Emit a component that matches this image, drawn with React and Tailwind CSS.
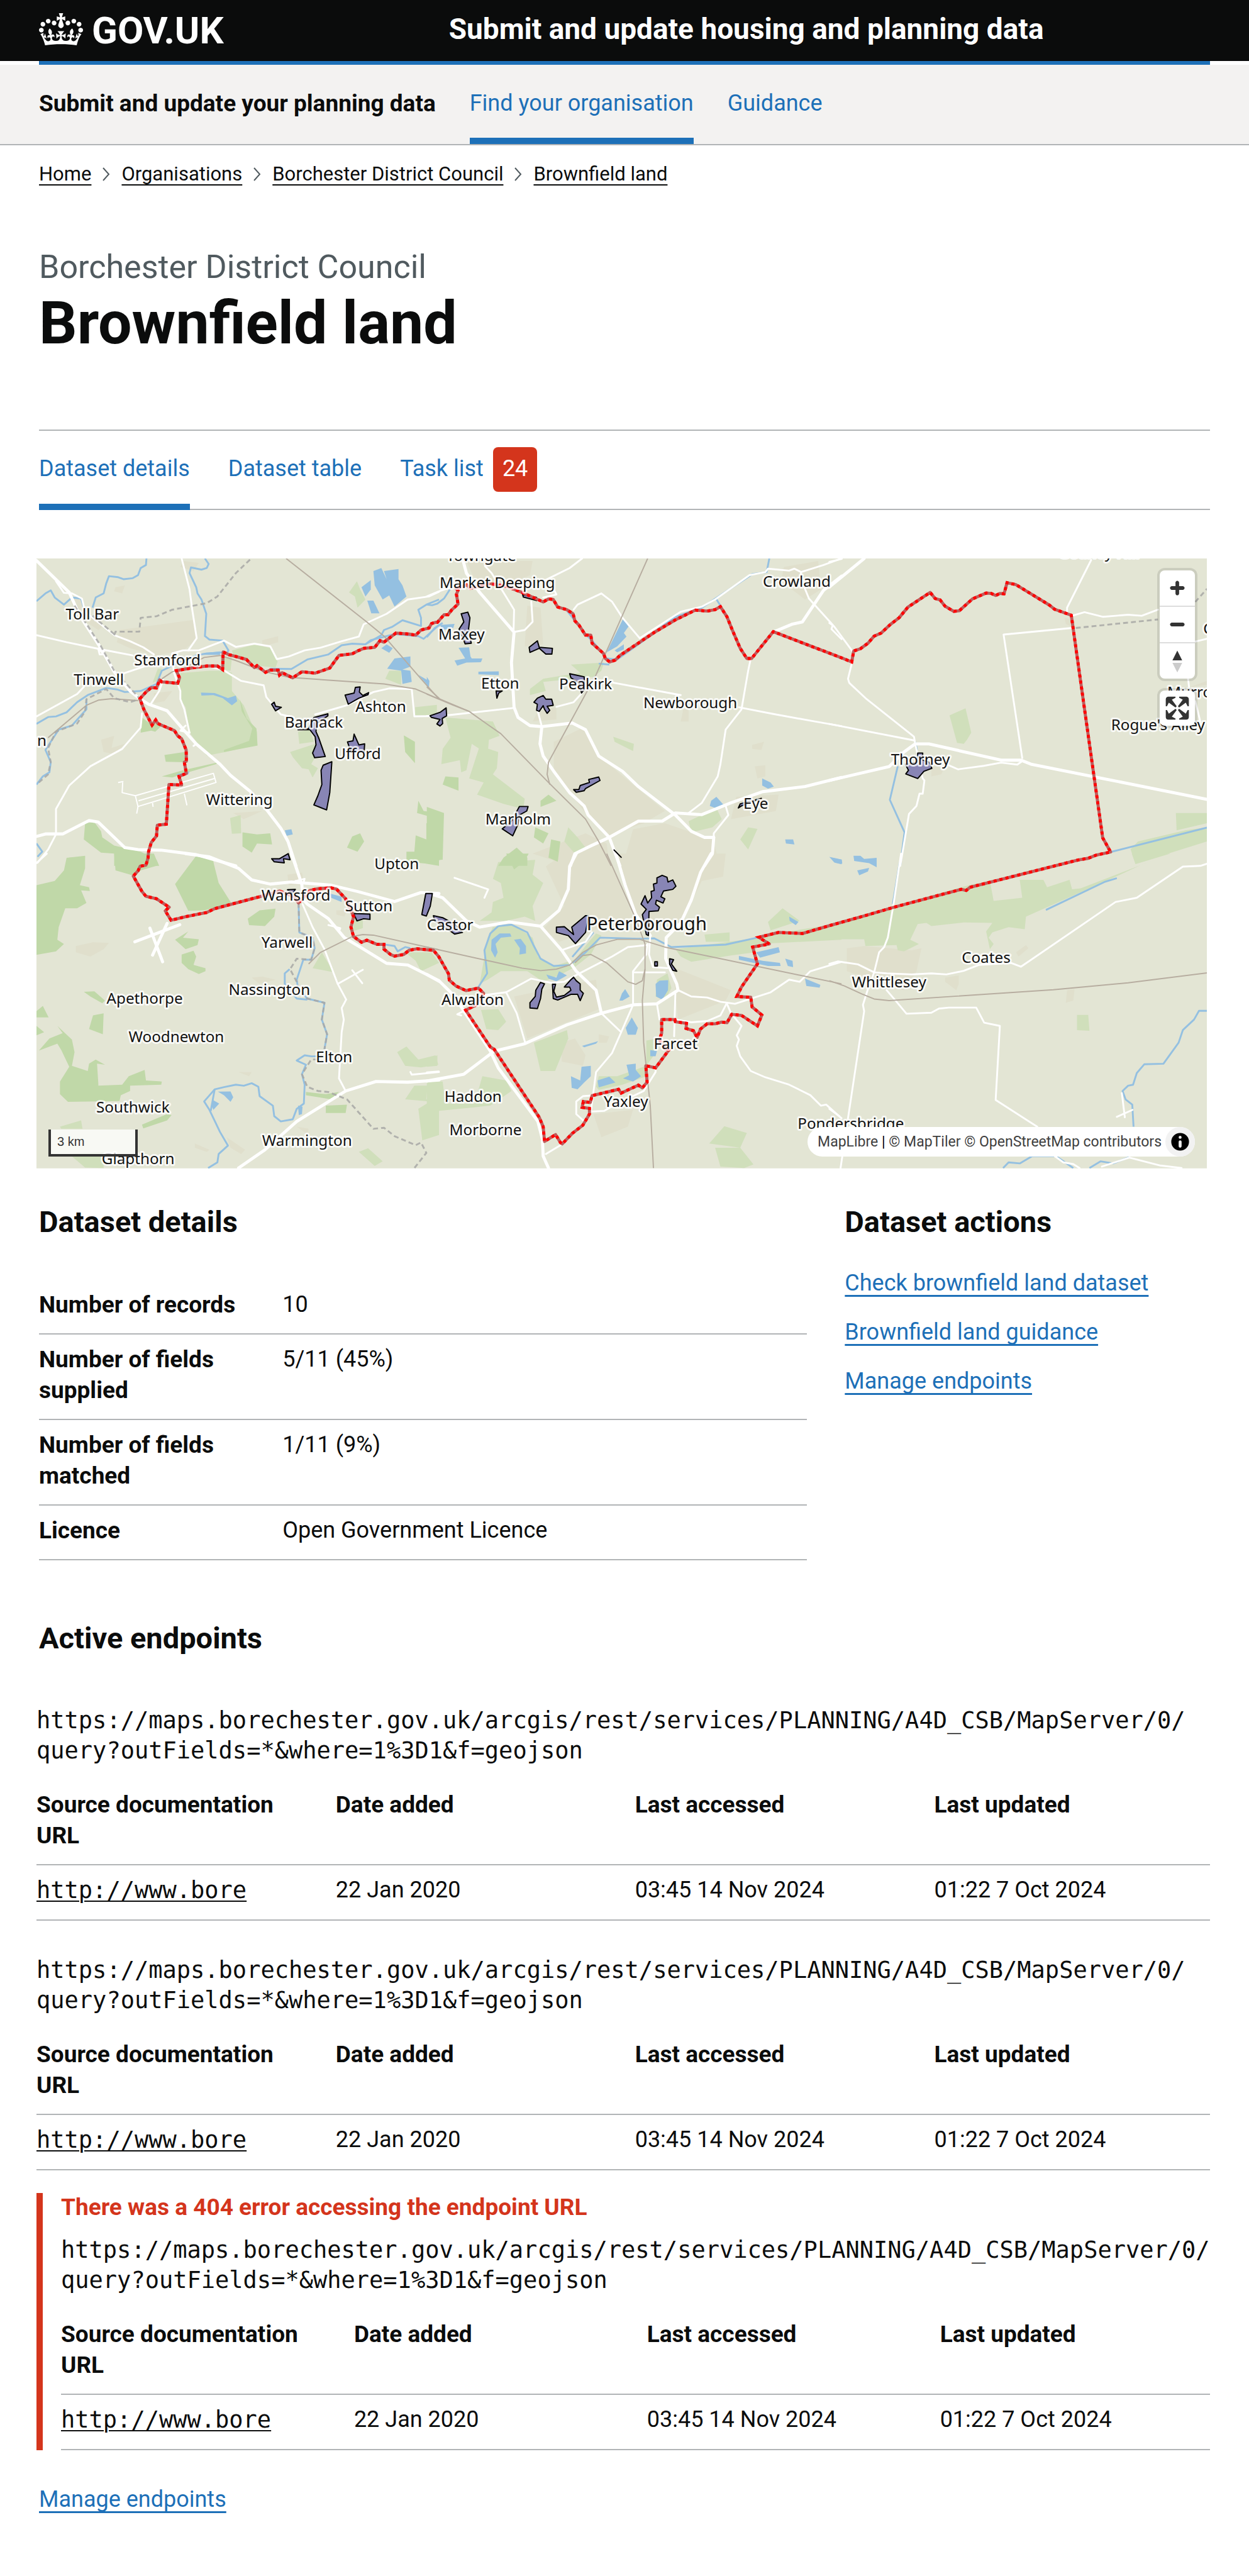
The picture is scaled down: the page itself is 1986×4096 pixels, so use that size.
import React from "react";

/* ---------- Map data: each survey sheet has its own origin and grid scale ---------- */

const SHEETS = {
  nw: [40, 900, 2.306, 3],
  n: [700, 900, 2.306, 3],
  ne: [1360, 900, 2.45, 3],
  sw: [40, 1400, 2.306, 2.904],
  s: [700, 1400, 2.306, 2.904],
  se: [1360, 1400, 2.45, 2.904],
};

function project(sheet, text) {
  const [ox, oy, sx, sy] = SHEETS[sheet];
  return text
    .trim()
    .split(/\s+/)
    .map((pair) => {
      const [x, y] = pair.split(",").map(Number);
      return (ox + x / sx).toFixed(1) + "," + (oy + y / sy).toFixed(1);
    })
    .join(" ");
}

const LAND = {
  nw: [
    "360,400 500,375 640,350 650,450 600,500 500,525 400,490 350,460",
    "170,240 220,250 240,320 300,380 280,400 200,330",
    "600,60 660,70 640,110 590,90",
    "490,710 560,700 530,750 490,760",
    "290,940 340,920 330,980 380,960 340,1010 300,1000",
    "900,450 960,430 960,460 900,480",
    "790,1300 900,1290 830,1330",
    "345,190 380,180 370,220 340,210",
  ],
  n: [
    "150,60 400,60 390,130 300,180 180,150",
    "480,950 590,880 650,1020 900,1290 820,1350 690,1410 600,1300 480,1100",
    "780,1380 900,1350 1080,1430 1110,1560 740,1560",
    "1350,90 1480,60 1490,200 1430,250 1340,160",
    "1170,1220 1330,1210 1320,1290 1150,1330",
    "420,800 490,780 490,840 400,850",
    "380,280 430,290 440,470 370,480",
    "970,790 990,790 990,850 960,850",
    "1240,1070 1280,1065 1280,1120 1250,1130",
    "1230,965 1275,950 1265,990 1230,985",
    "400,1500 600,1400 680,1450 690,1560 540,1560",
  ],
  ne: ["410,1060 460,1080 450,1110 410,1120", "945,340 985,350 985,390 950,370", "1450,680 1517,650 1517,670"],
  sw: [
    "195,440 260,422 320,425 300,455 250,490 195,470",
    "860,590 900,585 950,600 890,620",
    "995,100 1050,90 1060,150 1000,150",
    "1180,270 1220,270 1210,300 1180,290",
    "810,1040 860,1040 850,1060",
    "765,1350 835,1410 820,1430 780,1400",
    "645,1380 700,1410 690,1420 645,1400",
    "1030,1300 1075,1310 1070,1335",
  ],
  s: [
    "450,60 520,0 680,0 780,300 500,420 440,360 520,250",
    "720,0 1130,0 1120,110 1040,130 960,330 800,330",
    "330,680 640,600 650,740 380,880",
    "930,540 1150,650 1130,700 950,790",
    "630,1240 780,1220 760,1300 660,1350",
    "510,900 560,880 600,960 590,1010 510,990",
    "650,860 690,870 680,900 650,900",
  ],
  se: ["70,450 140,440 330,460 370,450 350,560 300,650 70,560", "465,590 520,580 520,620 510,650 465,610", "750,470 790,435 800,450 760,490", "955,650 985,645 980,700 950,710"],
};

const PARK = {
  nw: [
    "590,612 700,600 755,600 785,610 785,700 830,770 860,860 880,900 880,965 760,1000 690,1018 625,905 610,780 590,740 585,680",
    "785,500 870,472 935,490 958,555 950,585 880,575 840,545 790,520",
    "505,590 520,590 510,645 485,660",
    "740,530 785,535 780,600 750,595",
    "1258,160 1270,200 1290,250 1260,290 1250,235 1228,215",
    "1005,1000 1100,960 1110,1000 1085,1060 1110,1080 1090,1125 1075,1085 1050,1080 1015,1025",
    "1035,900 1080,890 1095,950 1040,960",
    "778,1325 818,1310 820,1400 785,1402",
    "1478,780 1560,768 1560,820 1478,818",
    "1365,640 1380,600 1425,600 1425,670",
  ],
  n: [
    "70,830 250,850 275,920 235,940 230,1010 170,960 150,1090 130,1100 125,1040 55,1060 60,985 90,930",
    "200,970 270,1000 265,1080 250,1110 370,1230 365,1280 290,1255 190,1210 215,1150 160,1130",
    "545,570 670,560 660,600 630,630 440,655 450,700 390,720 390,690 440,640 580,610",
    "705,925 783,960 780,995 710,950",
    "535,1370 570,1420 600,1470 560,1500 520,1440",
    "990,1340 1095,1275 1115,1330 1080,1370 1000,1395",
    "1185,1430 1215,1370 1250,1378 1215,1480",
  ],
  ne: [
    "483,820 547,785 570,905 553,940 540,960 513,955",
    "1392,1300 1517,1300 1517,1350 1395,1385",
    "1240,1440 1430,1385 1517,1370 1517,1440 1230,1550 1210,1478",
  ],
  sw: [
    "1125,470 1170,565 1090,545",
    "1250,305 1280,320 1280,355 1240,370",
    "1410,945 1445,918 1490,980 1555,960 1565,1005 1500,1018 1440,1010",
    "1475,1105 1525,1105 1520,1170 1568,1170 1568,1340 1505,1365 1490,1215 1535,1180 1440,1170",
    "1265,1420 1300,1403 1355,1465 1325,1487",
    "135,1300 215,1270 220,1310 140,1310",
    "170,1430 300,1420 300,1497 230,1495",
    "1440,470 1540,470 1568,520 1500,560 1480,510",
  ],
  s: [
    "940,455 1255,400 1330,378 1568,330 1568,410 1250,430 1240,470 1150,485 1000,515 960,490",
    "1290,325 1345,260 1410,320 1300,365",
    "1050,385 1145,375 1145,420 1055,420",
    "200,620 230,400 250,350 330,340 400,400 420,490 480,535 560,505 600,440 640,380 660,390 620,480 560,540 500,580 440,610 380,560 280,560 230,600",
    "270,40 410,30 400,100 440,140 400,250 410,320 370,300 300,320 200,320 245,280 250,230 290,210 280,140 250,120",
    "405,900 530,840 535,880 485,1035 430,1035",
    "870,600 910,570 925,640 900,700 865,680",
    "205,745 270,740 300,800 270,840 225,835",
    "0,980 40,960 40,1010 0,1015",
    "210,1060 300,1080 320,1130 240,1200 0,1230 0,1080 60,1085 70,1190 180,1190",
    "640,1110 650,1060 720,1060 830,1010 830,1060 740,1100 650,1125",
    "830,890 875,880 870,940 830,1010",
    "1125,1298 1210,1330 1185,1400 1155,1395 1068,1380",
    "1090,1400 1185,1400 1235,1480 1200,1497 1110,1490",
  ],
  se: [
    "0,335 360,215 560,150 645,130 660,225 775,210 765,125 860,125 875,160 965,125 975,170 1010,165 1370,0 1250,55 1150,110 790,300 785,360 720,350 655,375 640,400 660,430 645,455 630,370 655,330 540,328 410,345 390,330 355,335 325,410 360,430 300,465 275,460 270,435 145,440 140,408 0,408",
    "1215,0 1370,0 1230,50",
    "995,768 1040,768 1045,843 995,840",
  ],
};

const WOOD = {
  nw: [
    "815,740 822,800 862,885 850,945 755,990 755,1000 882,968 878,885 840,835",
    "445,830 480,865 495,840 520,870 495,900 480,895 440,905",
    "530,1015 605,1000 610,1050 535,1048",
    "520,1120 600,1090 735,1050 725,1060 620,1100 560,1125",
    "230,1350 265,1345 290,1390 295,1420 340,1460 440,1490 500,1530 510,1560 340,1560 340,1500 290,1495 225,1430",
    "170,1520 230,1515 225,1560 165,1560",
    "625,1560 650,1515 715,1530 715,1560",
    "1435,918 1477,950 1477,1055 1440,1000",
    "825,1395 880,1405 930,1400 937,1455 880,1450 860,1495 825,1465",
    "1240,1415 1270,1400 1285,1440 1260,1490 1220,1470",
    "1490,1240 1510,1290 1568,1300 1568,1330 1485,1300",
    "1480,1410 1520,1430 1520,1350 1568,1340 1568,1560 1515,1548 1445,1540 1445,1490 1475,1490",
  ],
  n: [
    "70,1120 120,1125 120,1190 60,1160",
    "430,1240 460,1210 490,1240 430,1270",
    "0,1270 65,1300 60,1530 0,1535",
    "410,1370 460,1400 440,1450 405,1420",
    "470,1430 505,1440 495,1540 460,1520",
    "290,1520 340,1470 380,1520 380,1560 270,1560",
  ],
  ne: [],
  sw: [
    "46,150 115,130 150,80 160,20 230,10 230,70 210,150 245,160 248,178 215,175 235,235 200,260 155,260 130,350 125,410 150,430 120,465 46,482",
    "340,0 490,0 508,55 440,80 415,105 345,80",
    "650,10 715,40 735,140 785,240 680,270 620,272 570,145",
    "845,310 890,270 950,262 945,300 910,345 850,340",
    "570,410 620,370 600,400 660,408 655,435 610,455",
    "595,480 640,462 650,490 640,530 685,545 685,560 660,573 620,550 595,520",
    "225,658 265,655 305,700 295,712 250,680",
    "46,750 70,725 92,780 46,780",
    "260,770 300,760 297,860 245,835",
    "46,820 75,850 46,865",
    "55,938 95,880 145,855 125,820 180,885 190,945 180,1010 240,1035 245,1000 270,980 305,1005 275,1000 280,1095 280,1105 370,1100 395,1060 455,1030 460,1080 520,1085 518,1100 400,1105 400,1130 365,1150 360,1178 165,1182 135,1145 135,1085 170,1015 140,935 125,905",
    "445,1290 540,1240 557,1245 540,1270 450,1308",
    "1065,1135 1140,1145 1190,1135 1160,1170 1065,1150",
    "1140,1200 1220,1195 1215,1235 1140,1235",
    "1475,0 1568,0 1568,35 1520,48",
  ],
  s: ["300,0 385,0 370,35 330,75", "0,0 60,0 50,30 0,38"],
  se: [],
};

const LAKE = {
  nw: [
    "1320,110 1350,95 1370,150 1360,110 1415,100 1415,150 1430,180 1445,235 1400,285 1380,230 1355,250 1325,180",
    "1275,190 1310,155 1310,200 1290,235",
    "1297,255 1320,255 1343,318 1312,318",
    "1350,490 1370,470 1393,490 1380,512",
    "1372,590 1400,540 1460,530 1460,580 1430,595 1460,600 1465,655 1430,665 1425,600",
    "1490,620 1530,650 1530,680",
    "668,708 720,710 770,735 800,722 805,750 785,770 750,735 715,720 670,722",
    "575,1110 625,1095 620,1110 590,1122",
    "985,1385 1010,1380 1015,1405 992,1412",
    "675,515 740,505 740,522 680,522",
  ],
  n: [
    "742,345 763,382 745,415 755,432 720,480 680,510",
    "710,500 745,470 745,495 720,510",
    "120,487 160,485 165,530 170,540 210,540 205,558 150,560 115,575 105,550 145,540",
    "195,605 272,603 272,622 195,618",
    "50,375 105,370 100,390 60,400",
    "1070,1265 1075,1240 1095,1220 1122,1260 1090,1275",
    "1268,1130 1300,1150 1312,1170 1290,1180 1268,1165",
    "1355,1430 1385,1430 1390,1455 1358,1450",
    "0,630 10,650 8,680 0,680",
    "1525,1518 1568,1530 1568,1552 1545,1545",
  ],
  ne: [],
  sw: [
    "732,1133 780,1132 790,1160 780,1182 755,1150",
    "712,1172 737,1190 715,1220 708,1200",
    "1035,1200 1052,1205 1050,1240 1038,1245",
    "1155,190 1200,205 1200,230 1160,210",
  ],
  s: [
    "245,410 275,380 315,380 320,395 280,400 260,430 268,470 258,495 243,460",
    "330,410 355,405 375,440 375,475 350,480 352,450",
    "452,575 490,590 500,560 530,580 490,608 460,595",
    "865,620 880,605 913,602 912,650 890,695 867,680",
    "738,665 750,645 767,680 740,700 728,700",
    "775,780 798,830 790,862 760,862 752,830",
    "587,915 648,893 640,905 595,922",
    "845,935 870,940 865,965 845,965",
    "545,1060 580,1080 585,1015 620,1010 620,1060 595,1090 570,1122 548,1115",
    "645,1080 690,1062 713,1090 650,1113",
    "755,1005 790,1000 790,1030 810,1060 780,1085 742,1070 765,1055",
    "1180,487 1270,510 1335,520 1338,535 1290,535 1180,505",
    "1245,470 1330,445 1335,470 1260,495",
    "1355,500 1383,510 1385,540 1365,535",
    "1430,595 1488,625 1485,638 1435,630",
    "1370,300 1405,325 1395,340 1372,320",
  ],
  se: ["0,15 50,28 52,48 20,42", "97,10 125,10 140,25 190,20 190,65 160,45 100,35", "112,80 160,68 155,85 120,103"],
};

const RIVER = {
  nw: [
    "46,258 80,220 100,205 115,240 150,275 180,240 215,245 225,290",
    "462,48 460,80 440,95 430,130 410,145 375,150 355,140 320,135 310,170 300,220 270,240 258,290",
    "683,48 697,75 690,95 670,103 630,92 625,120 650,190 655,220 670,250 688,320 683,430 700,447 750,452 772,500 765,515",
    "46,862 90,828 120,825 160,805 200,755 240,720 310,685 350,692 380,705 440,700 500,665 520,600 560,575 650,525 690,515 750,510",
    "46,1160 70,1120 95,1100 100,1050 80,990 105,940 130,890 180,870 235,790 235,740",
    "930,590 1010,592 1070,545 1150,520 1200,475 1240,467 1290,470 1350,425 1360,400 1390,385 1430,352 1500,380 1500,340 1490,300 1520,275 1568,250",
    "1290,470 1310,450 1400,420 1490,430 1510,443 1568,375",
    "46,1450 68,1490 50,1515",
  ],
  n: [
    "0,275 20,278 40,270 65,245 90,195",
    "0,435 30,390 60,365",
    "1295,48 1285,115 1230,125 1040,290 940,335 860,410",
    "1095,248 1110,280",
    "530,305 560,355 600,420 630,460 680,540 720,545 860,415",
    "650,565 690,570",
  ],
  ne: ["345,950 352,990", "275,1070 243,1235 302,1395 285,1560", "1130,1492 1517,1372"],
  sw: [
    "1037,235 1040,375 1090,400 1098,450 1085,505 1055,505 1030,600 1035,640 1070,690 1135,710 1125,790 1145,860 1135,930",
    "1110,965 1085,965 1060,960 1030,985 1065,1005 1050,1050 1060,1100 1057,1190 1030,1215 1015,1265 970,1275 945,1250 940,1200 890,1155 885,1110 860,1093 830,1105 800,1100 755,1112 720,1122 680,1180 700,1220 740,1325 770,1390 735,1430 730,1470 695,1497",
    "720,1122 705,1225",
    "1003,550 985,570 985,620 1030,690 1070,695",
    "1360,432 1400,440 1412,465 1440,445 1460,450",
  ],
  s: ["195,635 228,570 218,460 240,380 270,345 320,338 380,375 405,440 430,500 480,535 540,530 600,470 655,400 800,405 860,403 925,445 1130,433 1255,398", "550,492 630,375"],
  se: [
    "283,40 255,240",
    "870,268 1105,135 1155,117",
    "1517,748 1485,748 1465,790 1420,840 1403,900 1342,1000 1265,1003 1235,1045 1220,1100 1200,1105 1178,1130 1190,1170 1217,1195 1222,1300",
    "698,1497 720,1470 765,1475 815,1440 910,1440 980,1497",
    "1045,1497 1090,1465 1140,1475 1205,1445",
  ],
};

const RAIL = {
  nw: [
    "990,48 1290,355 1360,430 1500,640 1568,740",
    "1025,635 1360,665 1480,690 1568,740",
    "90,930 235,770 280,745 330,738 430,747",
    "520,640 560,605 600,590 680,535 740,525 800,550 910,605 1000,632 1025,635",
  ],
  n: ["0,680 50,740 160,800 230,865 280,910 460,1150 600,1330 650,1440 697,1560", "0,715 100,770 160,800", "835,48 640,620 460,1050 455,1110 465,1160"],
  ne: [],
  sw: ["1075,525 1120,470 1240,395 1280,385 1320,388 1568,458"],
  s: [
    "680,0 790,310 825,430 825,550 815,700 820,900 845,1200 857,1497",
    "0,445 250,515 360,545 430,557 490,550 540,530 590,470 640,435 720,408 805,408 900,445 1568,620",
    "560,520 590,485 620,480 680,520 760,610 790,622 815,605 825,550",
  ],
  se: ["0,605 60,630 130,668 180,692 240,700 900,648 1200,615 1517,568"],
};

const MAJOR = {
  nw: [
    "46,58 170,215 210,330 290,490 340,605 400,700 437,738 470,765 540,797 605,895 650,960 740,1060 780,1115 855,1195 920,1290 970,1375 997,1440 1027,1560",
    "46,1415 80,1403 145,1403 245,1337 280,1345 380,1470 430,1480 520,1483 650,1505 800,1560",
  ],
  n: [
    "543,1560 560,1500 620,1462 690,1420 800,1340 890,1340 940,1300 1040,1308 1150,1250 1270,1195 1430,1170 1568,1125",
    "135,48 150,120 200,215 330,410 320,560 330,780 345,830 390,870 435,875 550,857 600,890 650,1020 740,1095 800,1170 940,1310 1000,1390 1050,1420 1085,1420",
    "435,875 428,960 440,1020 480,1095 540,1200 595,1265 610,1310 690,1420 730,1560",
    "1568,135 1500,205 1420,360 1380,372 1310,410 1225,540",
    "1085,1420 1080,1500 1050,1560",
  ],
  ne: ["0,1140 240,1072 300,1000 345,960 400,960 690,1040 770,1040 810,1060 1098,1130 1517,1233", "0,188 140,48"],
  sw: [
    "1010,0 1040,110 1050,150 1052,215 1070,240 1150,310 1210,400 1270,445 1370,522 1450,530 1568,605",
    "610,0 700,15 810,70 860,125 930,145 1010,135 1160,150 1260,180 1400,228 1500,185 1568,190",
    "418,420 588,338",
    "475,355 523,515",
    "540,332 485,483",
    "1568,1078 1450,1088 1330,1085 1215,1130 1030,1275 910,1410 810,1497",
  ],
  s: [
    "0,575 50,610 90,660 130,730 240,940 270,1020 420,1275 437,1360 440,1440 460,1497",
    "0,185 60,210 150,320 200,350 310,325 430,345 500,270 535,170 540,60 565,0",
    "1075,0 1035,90 1000,220 960,330 905,400 903,500 945,620 950,650 870,715 780,720 660,760 530,815 370,905 255,940 140,1050 0,1083",
    "715,0 750,150 790,290 845,390",
    "430,345 510,460 565,560 640,650 660,760",
  ],
  se: [],
};

const MINOR = {
  nw: [
    "46,425 160,460 290,495 410,525",
    "120,160 150,217 180,220 218,245 230,310 340,425 400,455 450,485 490,520",
    "595,48 625,200 635,300 652,440 620,500",
    "560,515 600,500 660,500 755,452 800,483 870,467 930,480 955,543 1000,530 1060,500 1120,487 1200,455 1265,432 1283,372 1370,320 1450,250 1530,235 1568,212",
    "46,825 200,715 225,680",
    "350,625 470,572 560,570",
    "560,515 565,605 590,700 590,740 605,790 625,905",
    "565,605 640,585 700,580 750,595 820,650 905,672 915,730 970,815 1020,830",
    "1100,815 1180,785 1220,770 1320,705 1380,687 1465,690 1475,825 1568,823",
    "525,645 510,700 480,760",
    "445,810 440,880 370,985 250,1070 170,1165 120,1280 120,1405 90,1480 50,1545",
    "280,490 300,520 285,520 280,495",
    "625,905 590,895 610,870",
    "650,960 640,970",
  ],
  n: [
    "0,235 45,210 90,190",
    "220,85 245,120 330,300 328,410 370,400 400,360 395,260",
    "555,300 570,275 660,220 700,260 740,340 805,440",
    "440,160 540,95 587,48",
    "480,200 490,225 440,240",
    "805,440 960,310 1040,285 1090,250 1220,130 1280,115 1290,98 1370,108 1390,98 1415,115 1500,80 1568,48",
    "1415,115 1415,150 1445,245 1535,375 1530,395 1568,445",
    "1225,540 1215,600 1190,790 1130,890 1110,1060 1100,1120 1040,1250 985,1305",
    "700,658 960,720",
    "1180,780 1310,813 1460,848 1568,873",
    "490,778 555,755 590,705",
    "0,823 75,820 330,783",
    "420,800 435,875",
    "1130,1265 1140,1310 1085,1400 1085,1420",
  ],
  ne: [
    "0,65 50,50",
    "0,365 18,380 92,503",
    "92,555 75,640 80,660 150,740 340,925 345,960",
    "0,862 340,943",
    "1052,55 955,290 955,310",
    "975,330 1025,312 1100,335 1200,325 1255,330 1320,300",
    "975,390 700,422 775,1030",
    "775,1045 755,1062 690,1052 620,1068 517,1085 470,1060",
    "1440,630 1445,680",
    "1470,750 1490,850",
    "1470,457 1517,443",
    "345,960 375,1130 382,1140 375,1205 362,1205 350,1265 320,1305 285,1560",
  ],
  sw: [
    "1052,240 1090,350 1135,455 1185,620 1217,695 1200,735 1208,790 1200,850 1190,1070 1215,1130",
    "1185,620 1280,553",
    "1240,555 1278,617",
    "46,45 85,0",
    "1460,1040 1465,1052 1568,1040",
    "1150,340 1195,355 1190,370",
    "1025,130 1060,120 1055,140 1025,130",
  ],
  s: [
    "660,760 735,850 700,950 640,1040 620,1230",
    "735,850 780,720 780,560 830,480 835,430",
    "780,565 900,565",
    "845,390 840,480 855,540 910,545",
    "510,460 600,420 625,375",
    "835,435 760,445 700,490 570,575 520,610 470,615 395,595 300,660 340,760 372,900",
    "210,675 300,660",
    "620,1152 590,1155 565,1180 565,1240 600,1280",
    "620,1228 670,1225 720,1190 820,1130 865,1040 865,1020",
    "870,715 880,790",
    "940,790 1000,803 1060,797 1110,770 1135,710",
    "950,650 1000,680 1060,685 1110,705 1165,715 1300,660 1370,600 1410,610 1450,560 1568,515",
    "940,660 935,870",
    "1135,715 1150,760 1190,820 1172,865 1180,885 1172,915 1185,965 1225,1035 1280,1065 1370,1100 1450,1150 1490,1200 1510,1195 1568,1260",
    "510,1385 450,1430",
    "105,115 232,170 218,210",
    "0,1042 45,1037",
    "147,745 115,765 130,770",
  ],
  se: [
    "288,0 258,240 235,400 220,445 200,470 180,565 155,645 135,720 140,750 75,1260 45,1497",
    "0,525 35,513 115,527 180,565 230,570 330,575 410,570 470,575 540,558 600,530 730,520 770,538 1150,230 1235,210 1420,62 1490,58 1517,48",
    "230,650 270,705 310,762 410,757 440,738 480,733 590,733 622,805 685,820 668,1173 835,1300",
    "1175,1140 1187,1255",
    "1155,1253 1218,1220",
    "0,1215 40,1250",
    "905,1440 940,1470 980,1478 1005,1497",
    "1095,1490 1205,1447 1330,1485 1415,1497",
  ],
};

const TRACK = {
  nw: ["372,1150 370,1200 420,1215 715,1105 725,1150 430,1268 420,1215", "432,1240 720,1130", "430,1268 425,1303", "605,1205 615,1262", "355,1150 375,1145", "485,1250 487,1270"],
  n: [],
  ne: [],
  sw: [],
  s: [],
  se: [],
};

const BORDER = {
  nw: [
    "340,425 345,408 435,408 440,340 500,332 560,300 690,268 730,235 800,120 858,48",
    "190,280 290,480 340,600 437,738 400,755 340,735 310,690 235,740 230,800 200,860 120,900 90,980 100,1050 90,1110 46,1160",
    "258,330 340,420",
  ],
  n: [],
  ne: ["990,390 1320,348", "1470,262 1517,197"],
  sw: [
    "1037,235 1040,375 1090,400 1098,450 1085,505 1030,500 1005,550 1030,610 1035,640 1070,690 1135,710 1125,790 1145,860 1135,930",
    "1110,980 1085,980 1050,1050 1070,1110 1110,1130 1150,1135 1220,1170 1320,1310 1360,1305 1400,1345 1480,1388 1500,1375 1520,1425 1475,1497",
  ],
  s: [],
  se: [],
};

const SITES = {
  nw: [
    "1213,720 1247,710 1252,682 1270,680 1267,705 1280,722 1302,708 1300,718 1265,735 1225,765",
    "935,765 945,755 950,775 972,780 950,797 940,775",
    "1035,890 1075,885 1095,830 1148,812 1148,822 1105,860 1103,900 1113,930 1138,1022 1098,1028 1090,1005 1103,965 1100,925 1080,890",
    "1222,950 1243,945 1247,912 1255,935 1265,965 1287,960 1285,1000 1235,1000",
    "1163,1048 1155,1200 1143,1285 1095,1260 1110,1215 1125,1160 1122,1090 1130,1065",
    "935,1525 965,1525 998,1500 1005,1530 980,1525 983,1545 945,1540",
  ],
  n: [
    "130,320 155,312 163,340 158,395 168,465 145,468 122,395 140,360",
    "387,485 418,453 425,485 475,490 473,518 450,518 425,490 390,510",
    "540,615 595,630 597,690 585,710 575,660 545,635",
    "265,735 262,700 285,700 272,710",
    "405,755 418,735 440,722 450,740 472,740 478,770 455,775 465,795 455,810 445,790 440,772 425,800 415,795 418,765",
    "12,822 50,805 73,783 75,822 58,835 60,860 50,872 38,862 50,840 18,830",
    "555,1185 575,1185 580,1165 615,1150 612,1135 650,1123 655,1140 600,1180 595,1190 565,1198",
    "350,1268 383,1268 378,1290 350,1310 345,1355 325,1412 285,1378 320,1340",
    "362,225 415,240 415,255 365,238",
    "1178,1275 1185,1255 1265,1228 1190,1265",
    "708,1482 735,1518",
  ],
  ne: ["355,1005 375,1005 375,1040 400,1050 412,1080 380,1095 355,1130 307,1108 318,1090 305,1060 355,1050"],
  sw: ["1518,190 1543,190 1535,250 1520,297 1503,290", "1245,285 1307,288 1307,313 1283,310 1258,320", "995,172 1025,170 1015,190"],
  s: [
    "25,295 60,305 105,335 135,375 105,383 80,360 30,320",
    "600,295 612,297 600,375 562,428 535,390 490,375 490,350 520,348 555,385 548,350",
    "870,115 890,103 908,112 912,135 930,125 942,155 930,170 895,178 885,205 900,215 893,235 868,222 865,240 880,255 875,272 840,275 838,390 830,385 815,290 830,265 810,240 825,200 835,235 850,210 848,180 860,175 857,145 870,140",
    "430,613 445,620 435,645 430,690 418,738 390,735 390,710 410,680 412,650",
    "475,622 487,622 480,655 490,683 520,675 545,650 540,635 520,635 545,600 555,588 565,605 580,620 580,650 592,665 580,700 570,670 545,670 495,697 478,690",
    "862,515 872,515 872,535 862,535",
    "918,500 933,505 925,525 945,560 930,555 918,525",
  ],
  se: [],
};

const DISTRICT = [
  ["nw", "437,738 460,705 480,683 500,685 512,645 520,655 580,662 587,635 575,600 640,585 690,577 730,577 750,595 752,508 775,522 800,530 840,545 870,585 880,575 912,608 930,597 960,597 965,622 975,610 1015,635 1050,605 1100,612 1155,587 1190,525 1240,517 1265,500 1285,490 1325,485 1345,452 1360,460 1405,415 1455,420 1480,425 1500,400 1530,390 1540,368 1555,362"],
  ["n", "40,362 65,325 80,325 95,300 118,272 112,225 118,205 110,195 150,178 165,195 240,172 300,185 360,215 440,262 460,247 478,250 495,287 530,300 553,320 560,355 575,375 600,425 620,425 625,465 668,515 675,540 692,557 712,548 730,525 860,412 940,350 1015,302 1060,307 1090,300 1110,285 1135,335 1155,400 1185,490 1210,540 1228,540 1310,408 1568,537"],
  ["ne", "90,557 98,503 125,492 155,465 180,430 208,415 245,373 280,340 315,288 405,215 425,245 445,252 465,283 500,308 522,305 575,247 630,218 650,220 668,230 685,220 702,222 714,167 750,177 885,278 905,298 972,327 1098,1422 1130,1492 1070,1508"],
  ["se", "1040,22 1000,30 565,160 550,175 530,170 260,255 150,293 0,343"],
  ["s", "1420,380 1330,375 1255,398 1295,430 1232,445 1250,525 1190,635 1172,680 1225,684 1230,730 1267,768 1250,820 1190,770 1153,765 1135,805 1115,802 1090,810 1060,810 1035,835 1022,875 1008,843 980,832 982,808 940,800 938,790 888,790 888,855 880,885 900,930 915,935 865,1020 828,1010 833,1088 815,1115 800,1102 735,1140 725,1122 625,1152 618,1185 592,1180 587,1208 615,1213 615,1240 590,1293 550,1332 512,1382 505,1375 487,1338 445,1370 440,1300 425,1255 255,932 240,920 147,745 185,722 215,665 195,640 148,652 110,630 85,602 82,572 45,490 25,460"],
  ["sw", "1545,460 1485,453 1455,460 1435,480 1400,488 1385,480 1360,455 1360,432 1335,432 1295,412 1275,422 1245,395 1235,350 1245,300 1235,270 1215,215 1180,168 1160,163 1110,167 1080,175 1037,235 1020,205 965,178 890,205 720,262 690,280 610,300 555,317 533,272 548,255 500,215 460,203 445,180 412,107 430,82 438,60 460,55 468,20"],
  ["nw", "470,1490 480,1445 500,1413 503,1360 537,1355 547,1160 595,1162 585,1120 613,1105 605,1050 613,1045 612,990 595,935 580,920 568,895 505,860 497,842 483,868 470,835 452,790"],
];

const DISTRICT_POINTS = DISTRICT.map(([sheet, text]) => project(sheet, text)).join(" ");

const PLACES = [
  ["Toll Bar", 108, 1016], ["Stamford", 220, 1091], ["Tinwell", 121, 1123], ["n", 61, 1223],
  ["Ashton", 583, 1168], ["Barnack", 467, 1193], ["Ufford", 549, 1245], ["Wittering", 338, 1320],
  ["Towngate", 732, 920], ["Market Deeping", 721, 964], ["Maxey", 719, 1049], ["Etton", 789, 1129],
  ["Peakirk", 917, 1131], ["Newborough", 1055, 1161], ["Crowland", 1251, 962], ["Marholm", 796, 1352],
  ["Eye", 1219, 1326], ["Gedney Hill", 1735, 915], ["Thorney", 1461, 1254], ["Rogue's Alley", 1822, 1198],
  ["Murrow", 1914, 1144], ["C", 1973, 1040], ["Upton", 614, 1425], ["Wansford", 429, 1477],
  ["Sutton", 566, 1495], ["Castor", 700, 1525], ["Yarwell", 429, 1554], ["Nassington", 375, 1632],
  ["Apethorpe", 175, 1646], ["Woodnewton", 211, 1709], ["Elton", 518, 1742], ["Southwick", 158, 1824],
  ["Warmington", 430, 1879], ["Glapthorn", 167, 1909], ["Alwalton", 724, 1648], ["Farcet", 1072, 1720],
  ["Yaxley", 990, 1815], ["Haddon", 729, 1807], ["Morborne", 737, 1862], ["Pondersbridge", 1308, 1851],
  ["Coates", 1577, 1579], ["Whittlesey", 1397, 1619],
];

function Areas({ data, fill, ...rest }) {
  return (
    <g fill={fill} {...rest}>
      {Object.entries(data).flatMap(([sheet, list]) =>
        list.map((text) => <polygon key={sheet + text} points={project(sheet, text)} />)
      )}
    </g>
  );
}

function Lines({ data, stroke, width, ...rest }) {
  return (
    <g fill="none" stroke={stroke} strokeWidth={width} strokeLinejoin="round" {...rest}>
      {Object.entries(data).flatMap(([sheet, list]) =>
        list.map((text) => <polyline key={sheet + text} points={project(sheet, text)} />)
      )}
    </g>
  );
}

function MapDrawing() {
  return (
    <svg viewBox="60 916 1919 1000" className="block w-full" role="img" aria-label="Map of brownfield land in Borchester District">
      <rect x="60" y="916" width="1919" height="1000" fill="#e3e5d4" />
      <Areas data={LAND} fill="#e0dfcc" />
      <Areas data={PARK} fill="#d0dfbb" />
      <Areas data={WOOD} fill="#c0d8a8" />
      <Areas data={LAKE} fill="#94c0e1" />
      <Lines data={RIVER} stroke="#94c0e1" width="3" />
      <Lines data={TRACK} stroke="#ffffff" width="2" />
      <Lines data={MINOR} stroke="#ffffff" width="3" strokeLinecap="round" />
      <Lines data={MAJOR} stroke="#ffffff" width="5" strokeLinecap="round" />
      <Lines data={RAIL} stroke="#b7ada0" width="2" />
      <Lines data={BORDER} stroke="#a8a8a6" width="3" strokeDasharray="8 5" opacity="0.85" />
      <Areas data={SITES} fill="#8885b5" stroke="#000000" strokeWidth="2" strokeLinejoin="round" />
      <polygon points={DISTRICT_POINTS} fill="none" stroke="#bf5c5c" strokeWidth="5" strokeLinejoin="round" />
      <polygon points={DISTRICT_POINTS} fill="none" stroke="#ff0000" strokeWidth="5" strokeDasharray="5 5" />
      <g fill="#111111" stroke="#ffffff" strokeOpacity="0.8" strokeWidth="6" strokeLinejoin="round" paintOrder="stroke" className="font-['Noto_Sans',sans-serif]">
        <g fontSize="25">
          {PLACES.map(([name, x, y]) => (
            <text key={name} x={x} y={y}>{name}</text>
          ))}
        </g>
        <text x="962" y="1525" fontSize="30">Peterborough</text>
      </g>
    </svg>
  );
}

function ControlIcon({ children }) {
  return (
    <svg viewBox="0 0 29 29" className="size-[56px]" fill="#333333" aria-hidden="true">
      {children}
    </svg>
  );
}

function MapPanel() {
  return (
    <section aria-label="Map" className="relative -ml-[4px] mr-[5px] mt-[77px] overflow-hidden">
      <MapDrawing />
      <div className="absolute right-[19px] top-[19px] flex flex-col gap-[19px]">
        <div className="flex flex-col divide-y-2 divide-[#dddddd] overflow-hidden rounded-lg bg-white ring-4 ring-black/10">
          <button type="button" aria-label="Zoom in">
            <ControlIcon>
              <path d="M14.5 8.5c-.75 0-1.5.75-1.5 1.5v3h-3c-.75 0-1.5.75-1.5 1.5S9.25 16 10 16h3v3c0 .75.75 1.5 1.5 1.5S16 19.75 16 19v-3h3c.75 0 1.5-.75 1.5-1.5S19.75 13 19 13h-3v-3c0-.75-.75-1.5-1.5-1.5z" />
            </ControlIcon>
          </button>
          <button type="button" aria-label="Zoom out">
            <ControlIcon>
              <path d="M10 13c-.75 0-1.5.75-1.5 1.5S9.25 16 10 16h9c.75 0 1.5-.75 1.5-1.5S19.75 13 19 13h-9z" />
            </ControlIcon>
          </button>
          <button type="button" aria-label="Reset bearing to north">
            <ControlIcon>
              <path d="M10.5 14l4-8 4 8h-8z" />
              <path d="M10.5 16l4 8 4-8h-8z" fill="#cccccc" />
            </ControlIcon>
          </button>
        </div>
        <button type="button" aria-label="Enter fullscreen" className="rounded-lg bg-white ring-4 ring-black/10">
          <ControlIcon>
            <path d="M24 16v5.5c0 1.75-.75 2.5-2.5 2.5H16v-1l3-1.5-4-5.5 1-1 5.5 4 1.5-3h1zM6 16l1.5 3 5.5-4 1 1-4 5.5 3 1.5v1H7.5C5.75 24 5 23.25 5 21.5V16h1zm7-11v1l-3 1.5 4 5.5-1 1-5.5-4L6 13H5V7.5C5 5.75 5.75 5 7.5 5H13zm11 2.5c0-1.75-.75-2.5-2.5-2.5H16v1l3 1.5-4 5.5 1 1 5.5-4 1.5 3h1V7.5z" />
          </ControlIcon>
        </button>
      </div>
      <div className="absolute bottom-[19px] left-[19px] flex h-[43px] w-[142px] items-center border-4 border-t-0 border-[#333333] bg-white/75 pl-[10px] font-['Liberation_Sans',sans-serif] text-[20px] text-[#333333]">
        3 km
      </div>
      <div className="absolute bottom-[19px] right-[19px] flex h-[47px] items-center rounded-full bg-white pl-[16px] text-[23px] text-[#404040]">
        <p className="mr-[6px] whitespace-nowrap">
          <a href="#maplibre">MapLibre</a> <span className="text-black">|</span> <a href="#maptiler">© MapTiler</a>{" "}
          <a href="#openstreetmap">© OpenStreetMap contributors</a>
        </p>
        <button type="button" aria-label="Toggle attribution" className="rounded-full bg-[#f2f2f2]">
          <svg viewBox="0 0 20 20" className="size-[47px]" fill="#000000" fillRule="evenodd" aria-hidden="true">
            <path d="M4 10a6 6 0 1 0 12 0 6 6 0 1 0-12 0m5-3a1 1 0 1 0 2 0 1 1 0 1 0-2 0m0 3a1 1 0 1 1 2 0v3a1 1 0 1 1-2 0" />
          </svg>
        </button>
      </div>
    </section>
  );
}

/* ---------- Page chrome ---------- */

function Header() {
  return (
    <header className="bg-[#0b0c0c] px-[62px] text-white">
      <div className="flex h-[97px] items-start">
        <a href="#govuk" className="flex w-[35%] items-start gap-[14px]">
          <svg viewBox="0 0 132 97" className="mt-[21px] w-[70px]" fill="currentColor" aria-hidden="true">
            <path d="M25 30.2c3.5 1.5 7.7-.2 9.1-3.7 1.5-3.6-.2-7.8-3.9-9.2-3.6-1.4-7.6.3-9.1 3.9-1.4 3.5.3 7.5 3.9 9zM9 39.5c3.6 1.5 7.8-.2 9.2-3.7 1.5-3.6-.2-7.8-3.9-9.1-3.6-1.5-7.6.2-9.1 3.8-1.4 3.5.3 7.5 3.8 9zM4.4 57.2c3.5 1.5 7.7-.2 9.1-3.8 1.5-3.6-.2-7.7-3.9-9.1-3.5-1.5-7.6.3-9.1 3.8-1.4 3.5.3 7.6 3.9 9.1zm38.3-21.4c3.5 1.5 7.7-.2 9.1-3.8 1.5-3.6-.2-7.7-3.9-9.1-3.6-1.5-7.6.3-9.1 3.8-1.3 3.6.4 7.7 3.9 9.1zm64.4-5.6c-3.6 1.5-7.8-.2-9.1-3.7-1.5-3.6.2-7.8 3.8-9.2 3.6-1.4 7.7.3 9.2 3.9 1.3 3.5-.4 7.5-3.9 9zm15.9 9.3c-3.6 1.5-7.7-.2-9.1-3.7-1.5-3.6.2-7.8 3.7-9.1 3.6-1.5 7.7.2 9.2 3.8 1.5 3.5-.3 7.5-3.8 9zm4.7 17.7c-3.6 1.5-7.8-.2-9.2-3.8-1.5-3.6.2-7.7 3.9-9.1 3.6-1.5 7.7.3 9.2 3.8 1.3 3.5-.4 7.6-3.9 9.1zM89.3 35.8c-3.6 1.5-7.8-.2-9.2-3.8-1.4-3.6.2-7.7 3.9-9.1 3.6-1.5 7.7.3 9.2 3.8 1.4 3.6-.3 7.7-3.9 9.1zM69.7 17.7l8.9 4.7V9.3l-8.9 2.8c-.2-.3-.5-.6-.9-.9L72.4 0H59.6l3.5 11.2c-.3.3-.6.5-.9.9l-8.8-2.8v13.1l8.8-4.7c.3.3.6.7.9.9l-5 15.4v.1c-.2.8-.4 1.6-.4 2.4 0 4.1 3.1 7.5 7 8.1h.2c.3 0 .7.1 1 .1.4 0 .7 0 1-.1h.2c4-.6 7.1-4.1 7.1-8.1 0-.8-.1-1.7-.4-2.4V34l-5.1-15.4c.4-.2.7-.6 1-.9zM66 92.8c16.9 0 32.8 1.1 47.1 3.2 4-16.9 8.9-26.7 14-33.5l-9.6-3.4c1 4.9 1.1 7.2 0 10.2-1.5-1.4-3-4.3-4.2-8.7L108.6 76c2.8-2 5-3.2 7.5-3.3-4.4 9.4-10 11.9-13.6 11.2-4.3-.8-6.3-4.6-5.6-7.9 1-4.7 5.7-5.9 8-.5 4.3-8.7-3-11.4-7.6-8.8 7.1-7.2 7.9-13.5 2.1-21.1-8 6.1-8.1 12.3-4.5 20.8-4.7-5.4-12.1-2.5-9.5 6.2 3.4-5.2 7.9-2 7.2 3.1-.6 4.3-6.4 7.8-13.5 7.2-10.3-.9-10.9-8-11.2-13.8 2.5-.5 7.1 1.8 11 7.3L80.2 60c-4.1 4.4-8 5.3-12.3 5.4 1.4-4.4 8-11.6 8-11.6H55.5s6.4 7.2 7.9 11.6c-4.2-.1-8-1-12.3-5.4l1.4 16.4c3.9-5.5 8.5-7.7 10.9-7.3-.3 5.8-.9 12.8-11.1 13.8-7.2.6-12.9-2.9-13.5-7.2-.7-5 3.8-8.3 7.1-3.1 2.7-8.7-4.6-11.6-9.4-6.2 3.7-8.5 3.6-14.7-4.6-20.8-5.8 7.6-5 13.9 2.2 21.1-4.7-2.6-11.9.1-7.7 8.8 2.3-5.5 7.1-4.2 8.1.5.7 3.3-1.3 7.1-5.7 7.9-3.5.7-9-1.8-13.5-11.2 2.5.1 4.7 1.3 7.5 3.3l-4.7-15.4c-1.2 4.4-2.7 7.2-4.3 8.7-1.1-3-.9-5.3 0-10.2l-9.5 3.4c5 6.9 9.9 16.7 14 33.5 14.8-2.1 30.8-3.2 47.7-3.2z" />
          </svg>
          <span className="mt-[19px] text-[60px] font-bold leading-[60px]">GOV.UK</span>
        </a>
        <a href="#service" className="mt-[22px] text-[46px] font-bold leading-[49px]">
          Submit and update housing and planning data
        </a>
      </div>
    </header>
  );
}

function ServiceNav() {
  return (
    <>
      <div className="mx-[62px] h-[6px] bg-[#1d70b8]" />
      <nav aria-label="Service" className="border-b-2 border-[#b1b4b6] bg-[#f3f2f1] px-[62px]">
        <ul className="flex gap-[54px] text-[36px] leading-[49px] text-[#1d70b8]">
          <li className="pb-[40px] pt-[37px] text-[37px] font-bold text-[#0b0c0c]">
            <a href="#home">Submit and update your planning data</a>
          </li>
          <li className="border-b-10 border-[#1d70b8] pb-[30px] pt-[37px]">
            <a href="#find" aria-current="true">Find your organisation</a>
          </li>
          <li className="pb-[40px] pt-[37px]">
            <a href="#guidance">Guidance</a>
          </li>
        </ul>
      </nav>
    </>
  );
}

const CRUMBS = ["Home", "Organisations", "Borchester District Council", "Brownfield land"];

function Breadcrumbs() {
  return (
    <nav aria-label="Breadcrumb" className="pt-[26px]">
      <ol className="flex text-[31px] leading-[39px]">
        {CRUMBS.map((name, i) => (
          <li key={name} className="flex items-center">
            {i > 0 && (
              <svg viewBox="0 0 12 22" className="mx-[18px] h-[22px] w-[12px]" fill="none" stroke="#505a5f" strokeWidth="2" aria-hidden="true">
                <path d="M1 1l9 10-9 10" />
              </svg>
            )}
            <a href="#crumb" className="underline decoration-2 underline-offset-[6px] [text-decoration-skip-ink:none]">{name}</a>
          </li>
        ))}
      </ol>
    </nav>
  );
}

function Tabs() {
  return (
    <nav aria-label="Dataset" className="mt-[121px] border-y-2 border-[#b1b4b6]">
      <ul className="-mb-[2px] flex gap-[61px] text-[36px] leading-[49px] text-[#1d70b8]">
        <li className="border-b-10 border-[#1d70b8] pb-[31px] pt-[36px]">
          <a href="#details" aria-current="page">Dataset details</a>
        </li>
        <li className="pb-[41px] pt-[36px]">
          <a href="#table">Dataset table</a>
        </li>
        <li className="pt-[26px]">
          <a href="#tasks" className="flex items-start gap-[15px]">
            <span className="pt-[10px]">Task list</span>
            <span className="rounded-lg bg-[#d4351c] px-[15px] pb-[12px] pt-[10px] text-white">24</span>
          </a>
        </li>
      </ul>
    </nav>
  );
}

const SUMMARY = [
  ["Number of records", "10"],
  ["Number of fields supplied", "5/11 (45%)"],
  ["Number of fields matched", "1/11 (9%)"],
  ["Licence", "Open Government Licence"],
];

function BlueLink({ children }) {
  return (
    <a href="#link" className="text-[#1d70b8] underline decoration-3 underline-offset-[7px] [text-decoration-skip-ink:none]">
      {children}
    </a>
  );
}

function Details() {
  return (
    <div className="mt-[60px] grid grid-cols-3 gap-[60px]">
      <section className="col-span-2">
        <h2 className="text-[47px] font-bold leading-[49px]">Dataset details</h2>
        <dl className="mt-[68px]">
          {SUMMARY.map(([label, value]) => (
            <div key={label} className="flex border-b-2 border-[#b1b4b6] pb-[21px] pt-[15px]">
              <dt className="w-[31.7%] shrink-0 pr-[39px] text-[37px] font-bold">{label}</dt>
              <dd>{value}</dd>
            </div>
          ))}
        </dl>
      </section>
      <section>
        <h2 className="text-[47px] font-bold leading-[49px]">Dataset actions</h2>
        <ul className="mt-[49px] space-y-[29px]">
          <li><BlueLink>Check brownfield land dataset</BlueLink></li>
          <li><BlueLink>Brownfield land guidance</BlueLink></li>
          <li><BlueLink>Manage endpoints</BlueLink></li>
        </ul>
      </section>
    </div>
  );
}

const HEADINGS = ["Source documentation URL", "Date added", "Last accessed", "Last updated"];

function Endpoint() {
  return (
    <>
      <p className="whitespace-nowrap font-['DejaVu_Sans_Mono',monospace] text-[37px] leading-[48px]">
        https://maps.borechester.gov.uk/arcgis/rest/services/PLANNING/A4D_CSB/MapServer/0/
        <br />
        query?outFields=*&amp;where=1%3D1&amp;f=geojson
      </p>
      <table className="mt-[22px] w-full table-fixed border-collapse text-left">
        <colgroup>
          <col className="w-[25.5%]" />
          <col className="w-[25.5%]" />
          <col className="w-[25.5%]" />
          <col />
        </colgroup>
        <thead>
          <tr className="border-b-2 border-[#b1b4b6] align-top text-[37px]">
            {HEADINGS.map((h) => (
              <th key={h} scope="col" className="pb-[21px] pr-[39px] pt-[15px] font-bold">{h}</th>
            ))}
          </tr>
        </thead>
        <tbody>
          <tr className="border-b-2 border-[#b1b4b6] align-top">
            <td className="pb-[21px] pt-[15px]">
              <a href="#source" className="font-['DejaVu_Sans_Mono',monospace] text-[37px] leading-[49px] underline decoration-2 underline-offset-[4px]">http://www.bore</a>
            </td>
            <td className="pb-[21px] pt-[15px]">22 Jan 2020</td>
            <td className="pb-[21px] pt-[15px]">03:45 14 Nov 2024</td>
            <td className="pb-[21px] pt-[15px]">01:22 7 Oct 2024</td>
          </tr>
        </tbody>
      </table>
    </>
  );
}

export default function App() {
  return (
    <div className="bg-white font-[Roboto,sans-serif] text-[36px] leading-[49px] text-[#0b0c0c]">
      <Header />
      <ServiceNav />
      <div className="px-[62px] pb-[94px]">
        <Breadcrumbs />
        <main>
          <p className="mt-[100px] text-[52px] leading-[58px] text-[#505a5f]">Borchester District Council</p>
          <h1 className="mt-[12px] text-[95px] font-bold leading-[96px]">Brownfield land</h1>
          <Tabs />
          <MapPanel />
          <Details />
          <h2 className="mt-[99px] text-[47px] font-bold leading-[49px]">Active endpoints</h2>
          <div className="-ml-[4px] mt-[83px]">
            <Endpoint />
            <div className="mt-[55px]">
              <Endpoint />
            </div>
            <div className="mt-[36px] border-l-10 border-[#d4351c] pl-[29px]">
              <p className="mb-[22px] text-[37px] font-bold leading-[45px] text-[#d4351c]">
                There was a 404 error accessing the endpoint URL
              </p>
              <Endpoint />
            </div>
          </div>
          <p className="mt-[54px]"><BlueLink>Manage endpoints</BlueLink></p>
        </main>
      </div>
    </div>
  );
}
